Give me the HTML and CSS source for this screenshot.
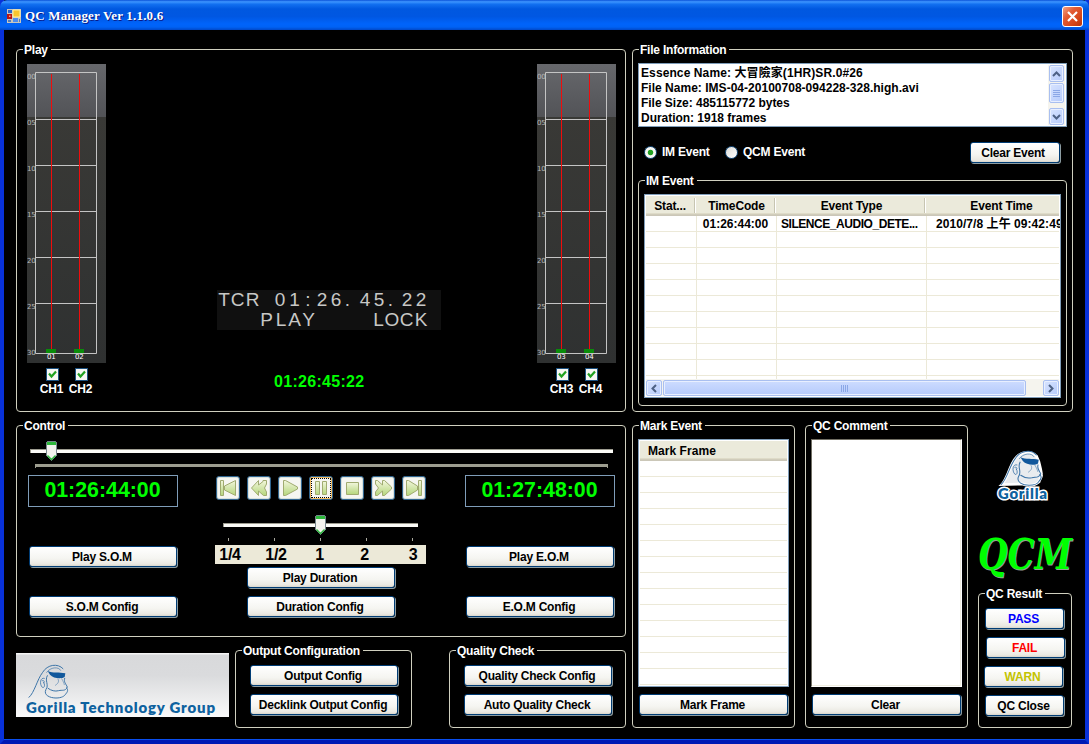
FILE: index.html
```html
<!DOCTYPE html>
<html lang="en">
<head>
<meta charset="utf-8">
<title>QC Manager</title>
<link rel="stylesheet" href="styles.css">
</head>
<body>
<svg class="defs" width="0" height="0" aria-hidden="true">
  <defs>
    <linearGradient id="hi" x1="0" y1="0" x2="0" y2="1"><stop offset="0" stop-color="#67686c"/><stop offset="1" stop-color="#525357"/></linearGradient>
    <linearGradient id="lo" x1="0" y1="0" x2="0" y2="1"><stop offset="0" stop-color="#393936"/><stop offset="1" stop-color="#2f3131"/></linearGradient>
    <linearGradient id="ic" x1="0" y1="0" x2="0" y2="1"><stop offset="0" stop-color="#f2f6dc"/><stop offset="1" stop-color="#b5d67c"/></linearGradient>
    <symbol id="meter" viewBox="0 0 79 299">
      <rect width="79" height="53" fill="url(#hi)"/>
      <rect y="53" width="79" height="246" fill="url(#lo)"/>
      <path d="M8.500 8.500H69.500V289.500H8.500ZM8.500 55.500H69.500M8.500 101.500H69.500M8.500 147.500H69.500M8.500 193.500H69.500M8.500 239.500H69.500" fill="none" stroke="#c4c4c4"/>
      <path d="M24.500 10V285M52.500 10V285" stroke="#f00c0c"/>
      <path d="M19 285h10v4h-10zM47 285h10v4h-10z" fill="#0a8c0a"/>
      <g class="scale"><text x="0" y="15">00</text><text x="0" y="61">05</text><text x="0" y="107">10</text><text x="0" y="153">15</text><text x="0" y="199">20</text><text x="0" y="245">25</text><text x="0" y="291">30</text></g>
    </symbol>
    <symbol id="thumb" viewBox="0 0 11 20">
      <path d="M.5 1.500 1.500.5H9.500L10.500 1.500V14.500L5.500 19.500.5 14.500Z" fill="#f3f3ee" stroke="#77868c"/>
      <path d="M1 1H10V4H1Z" fill="#2db83b"/>
      <path d="M1.500 14.500 5.500 18.500 9.500 14.500" fill="none" stroke="#2db83b" stroke-width="1.400"/>
    </symbol>
    <symbol id="ape-shape" viewBox="0 0 130 110" overflow="visible">
      <path d="M5 103C22 85 27 50 44 28 58 8 88 3 105 20L112 36C114 44 118 58 120 73 122 82 114 87 113 95 98 108 80 107 64 101Z" fill="#e9ecef" stroke="#fff" stroke-width="8"/>
    </symbol>
    <symbol id="ape" viewBox="0 0 130 110" overflow="visible">
      <g fill="none" stroke="#3c74a8" stroke-width="3" stroke-linecap="round">
        <path d="M3 103C20 88 27 50 44 28 58 4 90 0 105 17"/>
        <path d="M56 28C67 12 92 10 98 22" stroke-width="2"/>
        <path d="M49 46C36 42 34 64 43 73 50 76 52 65 47 58M43 53C49 51 51 57 47 60" stroke-width="2.400"/>
        <path d="M58 38C49 53 64 65 54 79 45 97 67 105 84 105 101 105 110 99 113 93 120 86 121 79 115 74"/>
        <path d="M110 46C106 56 114 63 118 72 112 86 102 80 92 83 81 86 70 83 60 76"/>
        <path d="M90 48C96 58 86 64 82 67M101 47C106 56 108 60 109 65" stroke-width="1.600"/>
      </g>
      <path d="M59 24C75 31 93 27 112 31L110 42C101 48 76 47 66 35Z" fill="#11589c"/>
    </symbol>
    <symbol id="tick" viewBox="1 1 11 11"><path d="M3 5.500 5.500 8.500 10 3.500" fill="none" stroke="#21a121" stroke-width="2.200"/></symbol>
  </defs>
</svg>
<div class="window">
  <header class="titlebar">
    <svg class="app-icon" width="14" height="14" viewBox="0 0 14 14"><path d="M0 0h14v14H0z" fill="#c9c6bd"/><path d="M1 1h4v3H1z" fill="#2a65cc"/><path d="M6 1h7v7H6z" fill="#f9c52d" stroke="#fff0a4"/><path d="M0 5h5v5H0z" fill="#b61414"/><path d="M2 6.500h1.500V8H2z" fill="#ff9b7a"/><path d="M6 9h5v4H6z" fill="#4e8df0"/><path d="M1 11h3v2H1zM12 10h1v3h-1z" fill="#517cbd"/></svg>
    <h1 class="title">QC Manager Ver 1.1.0.6</h1>
    <button class="close" aria-label="Close"><svg width="19" height="19" viewBox="0 0 19 19"><path d="M5 5 14 14M14 5 5 14" stroke="#fff" stroke-width="2.200"/></svg></button>
  </header>
  <main class="content">
    <fieldset class="group play">
      <legend>Play</legend>
      <div class="channels">
        <svg class="meter" width="79" height="299"><use href="#meter"/><g class="ch-num"><text x="20" y="294.500">01</text><text x="48" y="294.500">02</text></g></svg>
        <div class="checks">
          <label><svg class="check" width="13" height="13"><use href="#tick" width="11" height="11"/></svg>CH1</label>
          <label><svg class="check" width="13" height="13"><use href="#tick" width="11" height="11"/></svg>CH2</label>
        </div>
      </div>
      <div class="video">
        <svg class="overlay" width="224" height="40"><rect width="224" height="40" fill="#101010"/>
          <text y="16" x="7 20.500 35.500 49 63 77.500 91 105 119 130.500 148 162 173.500 190 204">TCR 01:26.45.22</text>
          <text y="36" x="49.500 64 77.500 91.500">PLAY</text><text y="36" x="161.500 175 189.500 204">LOCK</text></svg>
        <div class="timecode">01:26:45:22</div>
      </div>
      <div class="channels">
        <svg class="meter" width="79" height="299"><use href="#meter"/><g class="ch-num"><text x="20" y="294.500">03</text><text x="48" y="294.500">04</text></g></svg>
        <div class="checks">
          <label><svg class="check" width="13" height="13"><use href="#tick" width="11" height="11"/></svg>CH3</label>
          <label><svg class="check" width="13" height="13"><use href="#tick" width="11" height="11"/></svg>CH4</label>
        </div>
      </div>
    </fieldset>

    <fieldset class="group file">
      <legend>File Information</legend>
      <div class="info">
        <div class="info-text"><p class="name">Essence Name: 大冒險家(1HR)SR.0#26</p><p class="wide">File Name: IMS-04-20100708-094228-328.high.avi</p><p>File Size: 485115772 bytes</p><p>Duration: 1918 frames</p></div>
        <div class="vscroll">
          <span class="sb up"><svg width="9" height="6"><path d="M1 5 4.500 1.500 8 5"/></svg></span>
          <span class="sb vthumb"><svg width="7" height="9"><path d="M0 1.500H7M0 3.500H7M0 5.500H7M0 7.500H7" class="grip"/></svg></span>
          <span class="sb down"><svg width="9" height="6"><path d="M1 1 4.500 4.500 8 1"/></svg></span>
        </div>
      </div>
      <div class="filter">
        <span class="radio on"></span><span class="r1">IM Event</span>
        <span class="radio"></span><span class="r2">QCM Event</span>
        <button class="btn clear-event">Clear Event</button>
      </div>
      <fieldset class="group events">
        <legend>IM Event</legend>
        <div class="table">
          <div class="thead cols"><span>Stat...</span><span>TimeCode</span><span>Event Type</span><span>Event Time</span></div>
          <div class="tbody ev-body"><div class="row"><span></span><span class="tc">01:26:44:00</span><span class="type">SILENCE_AUDIO_DETE...</span><span class="when">2010/7/8 上午 09:42:49</span></div></div>
          <div class="hscroll">
            <span class="sb"><svg width="6" height="9"><path d="M5 1 1.500 4.500 5 8"/></svg></span>
            <span class="sb hthumb"><svg width="9" height="7"><path d="M1.500 0V7M3.500 0V7M5.500 0V7M7.500 0V7" class="grip"/></svg></span>
            <span class="sb last"><svg width="6" height="9"><path d="M1 1 4.500 4.500 1 8"/></svg></span>
          </div>
        </div>
      </fieldset>
    </fieldset>

    <div class="lower-left">
      <fieldset class="group control">
        <legend>Control</legend>
        <svg class="seek" width="583" height="28"><path d="M0 8H583V12H0Z" fill="#fbfbf7"/><path d="M0 8.500H583M.5 8V12" stroke="#9d9c90"/><path d="M5 23H578V26H6V27H5Z" fill="#9d9d8f"/><path d="M577 26h1v1h-1z" fill="#9d9d8f"/><use href="#thumb" x="16" y="0" width="11" height="20"/></svg>
        <div class="deck">
          <div class="side"><div class="time">01:26:44:00</div><button class="btn b1">Play S.O.M</button><button class="btn b2">S.O.M Config</button></div>
          <div class="mid">
            <div class="transport">
              <button class="tbtn" aria-label="First"><svg viewBox="0 0 22 22"><path d="M3.500 3.500H6.500V18.500H3.500ZM18.500 3.500V18.500L7.500 13V9Z"/></svg></button>
              <button class="tbtn" aria-label="Rewind"><svg viewBox="0 0 22 22"><path d="M10.500 3.500V8L15 4.500V3.500H18.500V7L16.500 11 18.500 15V18.500H15.500L10.500 14V18.500L3.500 11Z"/></svg></button>
              <button class="tbtn" aria-label="Play"><svg viewBox="0 0 22 22"><path d="M4.500 3.500H6.500L18.500 10V12L6.500 18.500H4.500Z"/></svg></button>
              <button class="tbtn focus" aria-label="Pause"><svg viewBox="0 0 22 22"><path d="M5.500 4.500H9.500V17.500H5.500ZM12.500 4.500H16.500V17.500H12.500Z"/></svg></button>
              <button class="tbtn" aria-label="Stop"><svg viewBox="0 0 22 22"><path d="M5.500 5.500H17.500V17.500H5.500Z"/></svg></button>
              <button class="tbtn" aria-label="Fast forward"><svg viewBox="0 0 22 22"><path d="M3.500 3.500H5.500L10.500 8V3.500H12.500L19.500 10V12L12.500 18.500H10.500V14L5.500 18.500H3.500V15L6.500 11 3.500 7Z"/></svg></button>
              <button class="tbtn" aria-label="Last"><svg viewBox="0 0 22 22"><path d="M15.500 3.500H18.500V18.500H15.500ZM3.500 3.500H5.500L14.500 9V13L5.500 18.500H3.500Z"/></svg></button>
            </div>
            <svg class="speed" width="211" height="27"><path d="M8 8H203V12H8Z" fill="#fbfbf7"/><path d="M8 8.500H203M8.500 8V12" stroke="#9d9c90"/><path d="M13.500 23v3M59.500 23v3M105.500 23v3M151.500 23v3M197.500 23v3" stroke="#aaa99e"/><use href="#thumb" x="100" y="0" width="11" height="20"/></svg>
            <div class="rates"><span>1/4</span><span>1/2</span><span>1</span><span>2</span><span>3</span></div>
            <button class="btn d1">Play Duration</button><button class="btn d2">Duration Config</button>
          </div>
          <div class="side"><div class="time">01:27:48:00</div><button class="btn b1">Play E.O.M</button><button class="btn b2">E.O.M Config</button></div>
        </div>
      </fieldset>
      <div class="footer">
        <svg class="brand" width="213" height="64"><use href="#ape" x="12" y="10" width="43.330" height="36.670"/><text class="brand-name" x="10" y="60" textLength="189">Gorilla Technology Group</text></svg>
        <fieldset class="group pair"><legend>Output Configuration</legend><button class="btn">Output Config</button><button class="btn">Decklink Output Config</button></fieldset>
        <fieldset class="group pair quality"><legend>Quality Check</legend><button class="btn">Quality Check Config</button><button class="btn">Auto Quality Check</button></fieldset>
      </div>
    </div>

    <div class="lower-right">
      <fieldset class="group list"><legend>Mark Event</legend>
        <div class="table"><div class="thead">Mark Frame</div><div class="tbody"></div></div>
        <button class="btn">Mark Frame</button>
      </fieldset>
      <fieldset class="group list"><legend>QC Comment</legend>
        <div class="comment"></div>
        <button class="btn">Clear</button>
      </fieldset>
      <div class="result-col">
        <svg class="badge" width="96" height="58"><use href="#ape-shape" x="22" y="0" width="45" height="38"/><use href="#ape" x="22" y="0" width="45" height="38"/><text class="badge-name" x="20" y="50" textLength="49">Gorilla</text></svg>
        <svg class="qcm" width="98" height="50"><text x="1" y="36" textLength="94" lengthAdjust="spacingAndGlyphs">QCM</text></svg>
        <fieldset class="group result"><legend>QC Result</legend>
          <button class="btn pass">PASS</button><button class="btn fail">FAIL</button><button class="btn warn">WARN</button><button class="btn">QC Close</button>
        </fieldset>
      </div>
    </div>
  </main>
</div>
</body>
</html>
```
FILE: styles.css
```css
* { box-sizing: border-box; }
body { margin: 0; background: #000; font: bold 12px/15px "Liberation Sans", "Noto Sans CJK TC", sans-serif; letter-spacing: -0.22px; color: #fff; overflow: hidden; }
.defs { position: absolute; }
p, h1 { margin: 0; }
svg { display: block; flex: none; }
button { padding: 0; margin: 0; font: inherit; letter-spacing: inherit; }
.window { width: 1089px; height: 744px; border: solid; border-width: 0 4px 4px; border-color: #000 #0831d9 #0019b4 #0831d9; background: #000; box-shadow: inset 0 -1px #0a4ff0; }
.titlebar { height: 30px; margin: 0 -4px; padding: 2px 6px 0 7px; display: flex; align-items: center; border-radius: 7px 7px 0 0; background: linear-gradient(#0a52d8 0, #3d95ff 6%, #1270f0 14%, #0058e0 30%, #0057e2 55%, #0064fb 80%, #0062f5 90%, #0048c8 100%); }
.title { margin-left: 4px; font: bold 13px/16px "Liberation Serif", serif; letter-spacing: .17px; text-shadow: 1px 1px #0a1883; white-space: nowrap; }
.close { margin-left: auto; width: 21px; height: 21px; border: 1px solid #fff; border-radius: 3px; background: linear-gradient(135deg, #f0a184, #e25b34 35%, #d64619 70%, #b83409); }
.content { display: grid; grid-template-columns: 610px 441px; grid-template-rows: 370px 310px; gap: 6px; padding: 12px 0 0 12px; }
.group { --pad: 5px; min-width: 0; margin: 0; padding: 0; border: 1px solid #d0d0bf; border-radius: 4px; }
legend { height: 15px; margin-left: calc(6px - var(--pad)); padding: 0 3px 0 1px; line-height: 17px; white-space: nowrap; }

.play { --pad: 10px; display: flex; justify-content: space-between; padding: 7px 9px 0 var(--pad); }
.scale text { font: 7px "DejaVu Sans", sans-serif; fill: #b9b9b9; letter-spacing: -.3px; }
.ch-num text { font: 7px "DejaVu Sans", sans-serif; fill: #fff; letter-spacing: -.2px; }
.channels { width: 79px; }
.checks { display: flex; padding: 5px 0 0 10px; }
.checks label { width: 29px; display: flex; flex-direction: column; align-items: center; line-height: 17px; }
.check { margin: 0 0 0 2px; border: 1px solid #1c5180; background: #f7f7f4; }
.video { padding: 226px 0 0; width: 224px; margin-right: -15px; }
.overlay text { font: 19px "Liberation Sans", sans-serif; fill: #c8c8c6; text-anchor: middle; letter-spacing: 0; }
.timecode { padding: 42px 0 0 57px; font-size: 16px; line-height: 20px; letter-spacing: .3px; color: #0f0; }

.file { padding: 6px var(--pad); }
.info { height: 64px; border: 1px solid #7f9db9; background: #fff; color: #000; display: flex; justify-content: space-between; padding: 1px; }
.info-text { padding: 1px 0 0 1px; letter-spacing: -.03px; }
.info-text p { height: 15px; white-space: nowrap; }
.info-text .wide { letter-spacing: .02px; }
.info-text .name { letter-spacing: .1px; }
.vscroll { width: 17px; padding: 0 1px; display: flex; flex-direction: column; background: #f5f4ee; }
.sb { display: flex; align-items: center; justify-content: center; border: 1px solid #a9bff0; border-radius: 2px; background: linear-gradient(135deg, #d8e4ff, #b5cafb); box-shadow: inset 0 0 0 1px #e8efff; }
.sb path { fill: none; stroke: #4d6185; stroke-width: 2; }
.sb .grip { stroke: #8ba7e6; stroke-width: 1; }
.up { height: 17px; }
.vthumb { height: 20px; margin-top: 1px; }
.down { height: 17px; margin-top: auto; }
.filter { height: 46px; display: flex; align-items: center; padding: 5px 7px 0 6px; }
.radio { width: 13px; height: 13px; border: 1px solid #1c5180; border-radius: 50%; background: linear-gradient(135deg, #dcdcd7, #fff); flex: none; }
.radio.on { background: radial-gradient(circle, #21a121 0 2.3px, #f7f7f4 3.2px); }
.r1 { margin-left: 5px; width: 63px; }
.r2 { margin-left: 5px; }
.btn { display: block; height: 21px; width: 148px; padding-right: 2px; border: 1px solid #003c74; border-radius: 3px; color: #000; line-height: 18px; background: linear-gradient(#fff, #f5f5f1 60%, #eae8e1 90%, #d9d5ca); box-shadow: 1px 1px 0 #8c9ca2; text-align: center; white-space: nowrap; }
.clear-event { width: 90px; padding-right: 4px; margin-left: auto; }
.events { height: 233px; padding: 6px var(--pad); }
.table { border: 1px solid #7f9db9; padding: 1px; background: #fff; color: #000; overflow: hidden; }
.events .table { height: 204px; display: flex; flex-direction: column; }
.thead { height: 20px; line-height: 20px; background: linear-gradient(#ebeadb 0 17px, #dedbc8 17px 18px, #d0ccbb 18px 19px, #cbc7b8 19px); }
.cols { display: grid; grid-template-columns: 49px 80px 150px 150px; text-align: center; letter-spacing: -.15px; }
.cols span { height: 15px; margin: 2px 0; padding-left: 4px; line-height: 16px; border-right: 1px solid #c7c5b2; box-shadow: 1px 0 #fff; }
.cols span:first-child { padding-left: 0; }
.tbody { background: repeating-linear-gradient(transparent 0 15px, #ece9d8 15px 16px); }
.ev-body { flex: 1; background: linear-gradient(#ece9d8, #ece9d8) 50px 0 / 1px 100% no-repeat, linear-gradient(#ece9d8, #ece9d8) 130px 0 / 1px 100% no-repeat, linear-gradient(#ece9d8, #ece9d8) 280px 0 / 1px 100% no-repeat, repeating-linear-gradient(transparent 0 15px, #ece9d8 15px 16px); }
.row { display: grid; grid-template-columns: 50px 80px 150px 150px; height: 16px; line-height: 16px; white-space: nowrap; }
.tc { text-align: center; letter-spacing: 0; padding-right: 1px; }
.type { padding-left: 5px; letter-spacing: -.45px; }
.when { padding-left: 10px; letter-spacing: .06px; }
.hscroll { height: 17px; padding: 1px 0 0; display: flex; background: #f5f4ee; }
.hscroll .sb { width: 16px; height: 16px; }
.hscroll .hthumb { width: 363px; margin-left: 1px; background: linear-gradient(#cddcff, #b5cafb); }
.hscroll .last { margin-left: auto; }

.lower-left { display: flex; flex-direction: column; gap: 6px; }
.control { --pad: 11px; height: 219px; padding: 8px var(--pad) 0; }
.seek { margin-left: 2px; }
.deck { display: grid; grid-template-columns: 187px 250px 150px; padding-top: 6px; }
.time { height: 32px; width: 150px; border: 1px solid #7f9db9; color: #0f0; text-align: center; font-size: 21.33px; line-height: 28px; letter-spacing: 0; padding-right: 1px; }
.side .b1, .side .b2 { margin-left: 1px; }
.b1 { margin-top: 39px; }
.b2 { margin-top: 29px; }
.mid { width: 211px; }
.transport { display: flex; gap: 7px; padding: 1px 0 0 1px; }
.tbtn { width: 24px; height: 24px; border: 1px solid #2f648f; border-radius: 3px; background: #f6f6f1; box-shadow: inset 0 0 0 1px #d8e0dc; flex: none; }
.tbtn path { fill: url(#ic); stroke: #a0ab70; }
.tbtn.focus { box-shadow: inset 0 0 0 1px #f5bd61; }
.tbtn.focus svg { outline: 1px dotted #000; outline-offset: -2px; }
.speed { margin-top: 15px; }
.rates { margin-top: 3px; height: 19px; background: #ece9d8; color: #000; font-size: 16px; line-height: 19px; letter-spacing: -.3px; display: grid; grid-template-columns: 30px 62px 25px 65px 29px; text-align: center; }
.rates span:last-child { padding-left: 3px; }
.d1 { margin: 3px 0 0 32px; }
.d2 { margin: 8px 0 0 32px; }
.footer { display: flex; align-items: flex-start; height: 85px; }
.brand { margin: 10px 6px 0 0; background: linear-gradient(#f5f5f5 0 1px, #d8d9db 2px, #dadbdd 35%, #fafafa); }
.brand-name, .badge-name { font: 800 15px Lato, sans-serif; fill: #0e629f; letter-spacing: 0; }
.pair { --pad: 14px; width: 177px; height: 85px; padding: 7px var(--pad); }
.pair .btn + .btn { margin-top: 8px; }
.quality { margin-left: 37px; }

.lower-right { display: flex; gap: 10px; }
.list { width: 163px; height: 310px; padding: 6px var(--pad) 0; }
.list .table, .comment { height: 248px; width: 151px; }
.list .thead { padding-left: 8px; letter-spacing: .05px; }
.list .tbody { height: 224px; }
.list .btn { width: 149px; margin: 7px 0 0 1px; }
.comment { background: #fff; border: 1px solid; border-color: #716f64 #fff #fff #716f64; box-shadow: inset -1px -1px #f1efe2; }
.result-col { width: 95px; display: flex; flex-direction: column; }
.badge { margin-top: 31px; }
.badge-name { paint-order: stroke; stroke: #fff; stroke-width: 3px; }
.qcm { margin-top: 26px; overflow: visible; margin-left: -1px; }
.qcm text { font: italic bold 42px "DejaVu Serif", serif; fill: #0f0; letter-spacing: 0; text-shadow: 1px 1px #999; }
.result { --pad: 6px; width: 94px; height: 142px; margin-top: auto; padding: 7px var(--pad); }
.result .btn { width: 79px; margin-bottom: 8px; }
.result .pass { color: #00f; }
.result .fail { color: #f00; margin-left: 1px; }
.result .warn { color: #c3c300; margin-left: -1px; }
```
